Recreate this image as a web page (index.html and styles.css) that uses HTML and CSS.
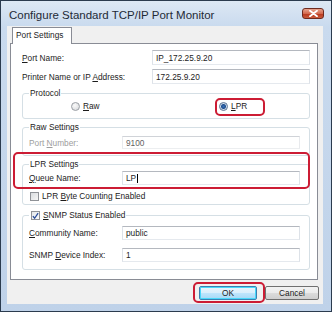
FILE: index.html
```html
<!DOCTYPE html>
<html lang="en">
<head>
  <meta charset="UTF-8">
  <title>Configure Standard TCP/IP Port Monitor</title>
  <link rel="stylesheet" href="styles.css">
</head>
<body>
  <div class="window">
    <div class="titlebar">
      <span class="title">Configure Standard TCP/IP Port Monitor</span>
      <span class="close">
        <svg width="9" height="7" viewBox="0 0 9 7"><path d="M1 0.8 L8 6.2 M8 0.8 L1 6.2" stroke="#fff" stroke-width="1.8" stroke-linecap="round"/></svg>
      </span>
    </div>

    <div class="client">
      <div class="tabs">
        <div class="tab">Port Settings</div>
      </div>

      <div class="panel">
        <div class="field row1">
          <label><u>P</u>ort Name:</label>
          <div class="input">IP_172.25.9.20</div>
        </div>
        <div class="field row2">
          <label>Printer Name or IP <u>A</u>ddress:</label>
          <div class="input">172.25.9.20</div>
        </div>

        <fieldset class="group protocol">
          <legend>Protocol</legend>
          <div class="radios">
            <span class="option"><span class="radio"></span><span><u>R</u>aw</span></span>
            <span class="option"><span class="radio on"></span><span><u>L</u>PR</span></span>
          </div>
        </fieldset>

        <fieldset class="group raw">
          <legend>Raw Settings</legend>
          <div class="field small disabled">
            <label>Port <u>N</u>umber:</label>
            <div class="input">9100</div>
          </div>
        </fieldset>

        <fieldset class="group lpr">
          <legend>LPR Settings</legend>
          <div class="field small tall">
            <label><u>Q</u>ueue Name:</label>
            <div class="input">LP<span class="caret"></span></div>
          </div>
          <div class="check-row">
            <span class="checkbox"></span><span>LPR <u>B</u>yte Counting Enabled</span>
          </div>
        </fieldset>

        <fieldset class="group snmp">
          <legend><span class="checkbox checked"><svg width="8" height="8" viewBox="0 0 8 8"><path d="M1 4.2 L3 6.6 L7 0.8" fill="none" stroke="#2a4d9a" stroke-width="1.5"/></svg></span><span><u>S</u>NMP Status Enabled</span></legend>
          <div class="field small tall">
            <label><u>C</u>ommunity Name:</label>
            <div class="input">public</div>
          </div>
          <div class="field small tall second">
            <label>SNMP <u>D</u>evice Index:</label>
            <div class="input">1</div>
          </div>
        </fieldset>
      </div>

      <div class="buttons">
        <div class="button default">OK</div>
        <div class="button">Cancel</div>
      </div>
    </div>

    <div class="mark mark-lpr"></div>
    <div class="mark mark-settings"></div>
    <div class="mark mark-ok"></div>
  </div>
</body>
</html>
```

FILE: styles.css
```css
* {
  box-sizing: border-box;
}
body {
  margin: 0;
  font-family: 'Liberation Sans', Arial, sans-serif;
  font-size: 8.3px;
  color: #1c1c1c;
}
u {
  text-decoration: underline;
  text-underline-offset: 1px;
}
.window {
  position: relative;
  width: 332px;
  height: 312px;
  border: 1px solid #2b3b4e;
  background: linear-gradient(#dde8f4, #c9daee 26px, #bfd2e9);
  padding: 0 8px 7px 6px;
  display: flex;
  flex-direction: column;
}
.titlebar {
  height: 25px;
  display: flex;
  align-items: center;
  justify-content: space-between;
  padding: 2px 0 0 2px;
}
.title {
  font-size: 11.5px;
  color: #1e2a36;
}
.close {
  width: 22px;
  height: 11px;
  margin-right: -1px;
  margin-top: -2px;
  border: 1px solid #6e2a1e;
  border-radius: 3px;
  background: linear-gradient(#e8a48f, #d46a4f 50%, #b8391f 55%, #c95a3b);
  display: flex;
  align-items: center;
  justify-content: center;
}
.close svg {
  display: block;
}
.client {
  flex: 1;
  background: #f0f0f0;
  padding: 1px 5px 0 3px;
  display: flex;
  flex-direction: column;
}
.tabs {
  display: flex;
  padding-left: 2px;
}
.tab {
  position: relative;
  z-index: 1;
  width: 60px;
  height: 17px;
  margin-bottom: -1px;
  padding-left: 3px;
  line-height: 15px;
  background: #fff;
  border: 1px solid #898c95;
  border-bottom: none;
}
.panel {
  height: 237px;
  background: #fff;
  border: 1px solid #898c95;
  padding: 0 7px 0 11px;
  display: flex;
  flex-direction: column;
}
.field {
  display: flex;
  align-items: center;
  height: 15px;
}
.field label {
  width: 130px;
  flex-shrink: 0;
}
.input {
  flex: 1;
  height: 100%;
  padding-left: 3px;
  display: flex;
  align-items: center;
  background: #fff;
  border: 1px solid;
  border-color: #b4b8bf #dde2e8 #e5e9ee #dde2e8;
}
.row1 {
  margin-top: 6px;
}
.row2 {
  margin-top: 4px;
}
.group {
  margin: 0;
  min-width: 0;
  border: 1px solid #d5dfe5;
  border-radius: 3px;
  padding: 3px 9px 7px 6px;
}
.group legend {
  padding: 0 1px;
  line-height: 10px;
  height: 10px;
}
.protocol {
  margin-top: 4px;
}
.radios {
  display: grid;
  grid-template-columns: 148px auto;
  height: 10px;
  margin-left: 42px;
  align-items: center;
}
.option {
  display: flex;
  align-items: center;
  gap: 3px;
}
.radio {
  width: 9px;
  height: 9px;
  border-radius: 50%;
  border: 1px solid #9a9ea4;
  background: radial-gradient(circle at 40% 35%, #fafafa, #d4d6d9);
}
.radio.on {
  border-color: #5c7594;
  background: radial-gradient(circle, #3a70b8 0, #1f4f8f 2px, #cfdbe9 3px, #e8eef5);
}
.small label {
  width: 93px;
}
.small .input {
  height: 13px;
}
.tall {
  height: 14px;
}
.tall .input {
  height: 14px;
}
.raw {
  margin-top: 3px;
  padding-bottom: 5px;
}
.disabled label {
  color: #9d9d9d;
}
.disabled .input {
  color: #5f5f5f;
  border-color: #d0d3d8 #e8eaed #eceef0 #e8eaed;
}
.lpr {
  margin-top: 3px;
  padding-top: 2px;
  padding-bottom: 3px;
}
.caret {
  display: inline-block;
  width: 1px;
  height: 9px;
  margin-left: 1px;
  background: #000;
}
.check-row {
  display: flex;
  align-items: center;
  height: 10px;
  margin-top: 6px;
  margin-left: 1px;
  gap: 3px;
}
.checkbox {
  display: inline-flex;
  align-items: center;
  justify-content: center;
  width: 9px;
  height: 9px;
  border: 1px solid #8f9297;
  background: linear-gradient(135deg, #d9dcdf, #f6f6f6);
}
.snmp {
  margin-top: 5px;
  padding-top: 5px;
}
.snmp legend {
  display: flex;
  align-items: center;
  gap: 3px;
  height: 11px;
  line-height: 11px;
  padding-left: 2px;
}
.checkbox.checked {
  background: linear-gradient(135deg, #e4e7ea, #fbfbfb);
}
.checkbox svg {
  display: block;
}
.second {
  margin-top: 8px;
}
.buttons {
  display: flex;
  justify-content: flex-end;
  gap: 8px;
  padding-top: 6px;
  margin-right: -1px;
}
.button {
  width: 54px;
  height: 14px;
  line-height: 12px;
  text-align: center;
  border: 1px solid #707070;
  border-radius: 2px;
  background: linear-gradient(#f3f3f3, #ebebeb 50%, #dcdcdc 50%, #cfcfcf);
}
.button.default {
  width: 58px;
  border-color: #3c7fb1;
  background: linear-gradient(#e9f5fd, #d9effc 50%, #bee6fd 50%, #a7d9f5);
  box-shadow: inset 0 0 0 1px #48d8fb;
}
.mark {
  position: absolute;
  border: 2px solid #cc1c34;
  border-radius: 5px;
}
.mark-lpr {
  left: 214px;
  top: 97px;
  width: 50px;
  height: 18px;
}
.mark-settings {
  left: 12px;
  top: 151px;
  width: 297px;
  height: 37px;
}
.mark-ok {
  left: 192px;
  top: 281px;
  width: 72px;
  height: 21px;
}
```
